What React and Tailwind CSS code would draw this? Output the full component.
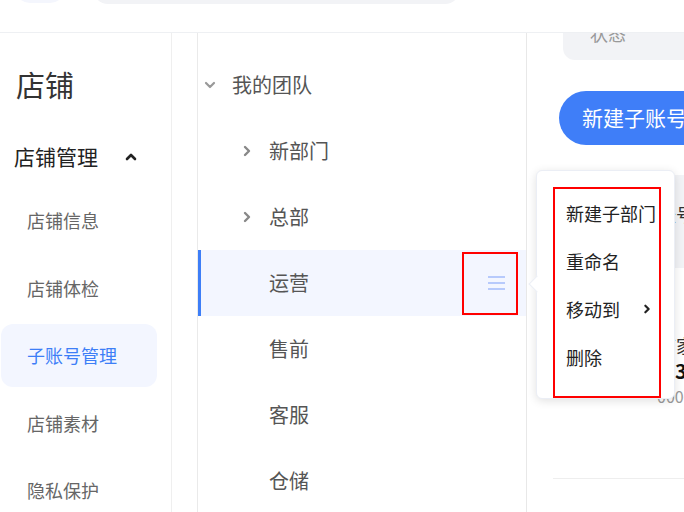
const menu = ["店铺信息", "店铺体检", "子账号管理", "店铺素材", "隐私保护"];

function Chevron({ dir = "right", className = "", stroke = 2.2 }) {
  const d = {
    right: "M4 2 L8 6 L4 10",
    down: "M2 4 L6 8 L10 4",
    up: "M2 8 L6 4 L10 8",
  }[dir];
  return (
    <svg viewBox="0 0 12 12" className={className} fill="none">
      <path d={d} stroke="currentColor" strokeWidth={stroke} strokeLinecap="round" strokeLinejoin="round" />
    </svg>
  );
}

function TreeRow({ label, level, arrow, active }) {
  if (level === 0) {
    return (
      <div className="h-[66px] flex items-center pl-[6px]">
        <Chevron dir="down" className="w-[12px] h-[12px] text-[#999]" />
        <span className="ml-[16px] text-[20px] text-[#555]">{label}</span>
      </div>
    );
  }
  if (active) {
    return (
      <div className="relative h-[66px] flex items-center justify-between bg-[#f3f6ff] border-l-[3px] border-[#3d7ef7] pl-[68px] pr-[21px]">
        <span className="text-[20px] text-[#555]">{label}</span>
        <svg viewBox="0 0 17 14" className="w-[17px] h-[14px]">
          <path d="M0 1 H17 M0 7 H17 M0 13 H17" stroke="#a4bcfb" strokeWidth="1.6" />
        </svg>
        <div className="absolute left-[261px] top-[2px] w-[56px] h-[63px] border-2 border-[#f00]" />
      </div>
    );
  }
  return (
    <div className="h-[66px] flex items-center pl-[43px]">
      {arrow ? (
        <Chevron dir="right" className="w-[12px] h-[12px] text-[#888]" stroke={2.4} />
      ) : (
        <span className="w-[12px]" />
      )}
      <span className="ml-[16px] text-[20px] text-[#555]">{label}</span>
    </div>
  );
}

export default function App() {
  return (
    <div
      className="relative w-[684px] h-[512px] overflow-hidden bg-white"
      style={{ fontFamily: '"Noto Sans CJK SC", "Noto Sans", sans-serif' }}
    >
      {/* top bar, scrolled mostly out of view */}
      <div className="h-[33px] border-b border-[#eef0f3] flex overflow-hidden">
        <div className="ml-[15px] w-[50px] h-[30px] -mt-[27px] rounded-full bg-[#f4f6fd]" />
        <div className="ml-[28px] w-[367px] h-[30px] -mt-[26px] rounded-full bg-[#f2f3f6]" />
      </div>

      <div className="flex h-[479px]">
        {/* sidebar */}
        <div className="w-[172px] border-r border-[#efefef] shrink-0">
          <div className="mt-[31px] h-[40px] leading-[40px] pl-[16px] text-[29px] text-[#333]">店铺</div>
          <div className="mt-[38px] h-[30px] flex items-center pl-[14px] text-[21px] text-[#222]">
            <span>店铺管理</span>
            <Chevron dir="up" className="ml-[27px] w-[12px] h-[12px] text-[#222]" stroke={2.6} />
          </div>
          <div className="mt-[17px] flex flex-col gap-[4.5px]">
            {menu.map((m) => (
              <div
                key={m}
                className={
                  m === "子账号管理"
                    ? "ml-[1px] w-[156px] h-[63px] rounded-[12px] bg-[#f3f6ff] flex items-center pl-[26px] text-[18px] text-[#3d7ef7]"
                    : "ml-[1px] w-[156px] h-[63px] flex items-center pl-[26px] text-[18px] text-[#666]"
                }
              >
                {m}
              </div>
            ))}
          </div>
        </div>

        <div className="w-[26px] border-r border-[#eaeaea] shrink-0" />

        {/* department tree */}
        <div className="w-[329px] border-r border-[#e8e8e8] shrink-0 pt-[19px]">
          <TreeRow label="我的团队" level={0} />
          <TreeRow label="新部门" level={1} arrow />
          <TreeRow label="总部" level={1} arrow />
          <TreeRow label="运营" level={1} active />
          <TreeRow label="售前" level={1} />
          <TreeRow label="客服" level={1} />
          <TreeRow label="仓储" level={1} />
        </div>

        {/* right content */}
        <div className="flex-1 overflow-hidden">
          <div className="ml-[36px] h-[27px] rounded-bl-[12px] bg-[#f2f3f6] overflow-hidden">
            <div className="pl-[27px] -mt-[9px] leading-[18px] text-[18px] text-[#999]">状态</div>
          </div>
          <div className="mt-[31px] ml-[32px] h-[54px] rounded-l-full bg-[#3f7ef8] flex items-center pl-[23px] text-[21px] text-white whitespace-nowrap">
            新建子账号
          </div>
          <div className="mt-[30px] ml-[26px] h-[93px] bg-[#f2f3f6] pt-[26px] pl-[87px] text-[18px] text-[#333] whitespace-nowrap">
            子账号
          </div>
          <div className="mt-[65px] ml-[26px] pl-[105px] text-[18px] leading-[24px] text-[#333] whitespace-nowrap">店家</div>
          <div className="ml-[26px] pl-[122px] text-[20px] leading-[28px] font-bold text-[#111] whitespace-nowrap">3200</div>
          <div className="ml-[26px] pl-[104px] text-[16px] leading-[22px] text-[#999] whitespace-nowrap">000+</div>
          <div className="mt-[71px] ml-[26px] border-t border-[#eeeeee]" />
        </div>
      </div>

      {/* popup menu */}
      <div className="absolute left-[536px] top-[170px] w-[139px] h-[229px] bg-white rounded-[6px] shadow-[0_2px_10px_rgba(0,0,0,0.12)] border border-[#ebeef5]">
        <div className="absolute -left-[6px] top-[107px] w-[12px] h-[12px] rotate-45 bg-white border-l border-b border-[#ebeef5]" />
        <div className="relative pt-[18px] pl-[29px] pr-[22px] flex flex-col">
          {["新建子部门", "重命名", "移动到", "删除"].map((t) => (
            <div key={t} className="h-[48px] flex items-center justify-between text-[18px] text-[#222] whitespace-nowrap">
              <span>{t}</span>
              {t === "移动到" && <Chevron dir="right" className="w-[10px] h-[10px] text-[#222]" stroke={2.6} />}
            </div>
          ))}
        </div>
        <div className="absolute left-[16px] top-[16px] w-[108px] h-[211px] border-2 border-[#f00]" />
      </div>
    </div>
  );
}
